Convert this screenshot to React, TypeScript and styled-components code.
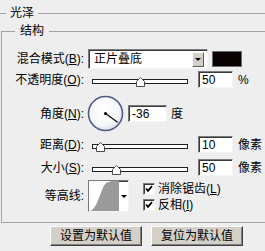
import React from 'react';
import styled, { createGlobalStyle } from 'styled-components';

const GlobalStyle = createGlobalStyle`
  html, body {
    margin: 0;
    padding: 0;
    background: #eeeeee;
  }
  body {
    font-family: 'Liberation Sans', 'Noto Sans CJK SC', sans-serif;
    font-size: 12px;
    color: #000;
  }
`;

const Frame = styled.div`
  width: 265px;
  height: 251px;
  overflow: hidden;
  padding-top: 6px;
  box-sizing: border-box;
`;

const OuterGroup = styled.fieldset`
  margin: 0 0 0 -6px;
  width: 300px;
  height: 280px;
  box-sizing: border-box;
  border: 1px solid #a3a3a3;
  padding: 4px 0 0 6px;

  & > legend {
    margin-left: 5px;
    padding: 0 4px;
    line-height: 14px;
  }
`;

const InnerGroup = styled.fieldset`
  margin: 0;
  width: 290px;
  box-sizing: border-box;
  border: 1px solid #a3a3a3;
  padding: 11px 0 10px 0;

  & > legend {
    margin-left: 13px;
    padding: 0 5px;
    line-height: 14px;
  }
`;

const Row = styled.div<{ $top: number; $h: number }>`
  display: flex;
  align-items: center;
  height: ${(p) => p.$h}px;
  margin-top: ${(p) => p.$top}px;
`;

const Label = styled.span`
  width: 82px;
  margin-right: 4px;
  text-align: right;
  line-height: 14px;
  white-space: nowrap;
`;

const U = styled.span`
  text-decoration: underline;
`;

const Sunken = styled.div<{ $w: number; $h: number }>`
  width: ${(p) => p.$w}px;
  height: ${(p) => p.$h}px;
  box-sizing: border-box;
  background: #fff;
  border: 1px solid;
  border-color: #7a7a7a #f4f4f4 #f4f4f4 #7a7a7a;
  box-shadow: inset 1px 1px 0 #3a3a3a;
`;

const Select = styled(Sunken)`
  display: flex;
  align-items: center;
  padding: 0 2px 0 5px;
  font-size: 12px;
  line-height: 14px;
`;

const SelectText = styled.span`
  flex: 1;
`;

const ArrowButton = styled.div`
  width: 12px;
  height: 15px;
  box-sizing: border-box;
  background: #d4d0c8;
  border: 1px solid;
  border-color: #ffffff #5a5a5a #5a5a5a #ffffff;
  display: flex;
  align-items: center;
  justify-content: center;
  margin-right: 1px;
`;

const Triangle = styled.div`
  width: 0;
  height: 0;
  border-left: 3px solid transparent;
  border-right: 3px solid transparent;
  border-top: 3px solid #000;
`;

const Swatch = styled.div`
  width: 30px;
  height: 16px;
  margin-left: 4px;
  box-sizing: border-box;
  background: #0a0202;
  border: 1px solid #6d6d6d;
`;

const SliderWrap = styled.div`
  position: relative;
  width: 104px;
  height: 16px;
  padding: 0 4px;
  box-sizing: border-box;
  display: flex;
  align-items: center;
  margin-right: 6px;
`;

const Track = styled.div`
  flex: 1;
  height: 5px;
  margin-top: 4px;
  box-sizing: border-box;
  background: #fff;
  border: 1px solid #1e1e1e;
`;

const Thumb = styled.svg`
  position: absolute;
  bottom: 1px;
  width: 9px;
  height: 10px;
`;

const Field = styled(Sunken)`
  padding-left: 3px;
  font-size: 12px;
  line-height: 14px;
  display: flex;
  align-items: center;
`;

const Unit = styled.span<{ $gap: number }>`
  margin-left: ${(p) => p.$gap}px;
  line-height: 14px;
`;

const Dial = styled.svg`
  width: 37px;
  height: 37px;
  margin-left: -1px;
  margin-right: 4px;
`;

const ContourBox = styled(Sunken)`
  display: flex;
  margin-right: 14px;
`;

const ContourGraph = styled.svg`
  width: 29px;
  height: 30px;
  display: block;
`;

const ContourArrow = styled.div`
  flex: 1;
  display: flex;
  align-items: center;
  justify-content: center;
  border-left: 1px solid #9a9a9a;
`;

const CheckList = styled.div`
  display: flex;
  flex-direction: column;
  margin-top: 2px;
`;

const CheckLine = styled.label`
  display: flex;
  align-items: center;
  height: 16px;
  line-height: 14px;
`;

const CheckBox = styled(Sunken)`
  margin-right: 3px;
  display: flex;
  align-items: center;
  justify-content: center;
`;

const ButtonRow = styled.div`
  display: flex;
  gap: 9px;
  margin: 3px 0 0 49px;
`;

const Button = styled.button`
  width: 92px;
  height: 20px;
  padding: 0;
  box-sizing: border-box;
  font-family: 'Liberation Sans', 'Noto Sans CJK SC', sans-serif;
  font-size: 12px;
  line-height: 14px;
  color: #000;
  background: #d4d0c8;
  border: 1px solid;
  border-color: #ffffff #404040 #404040 #ffffff;
  box-shadow: inset -1px -1px 0 #808080;
`;

const Slider = ({ value }: { value: number }) => (
  <SliderWrap>
    <Track />
    <Thumb viewBox="0 0 9 10" style={{ left: 4 + value * 96 - 4.5 }}>
      <polygon
        points="0.5,9.5 0.5,4.5 4.5,0.5 8.5,4.5 8.5,9.5"
        fill="#fff"
        stroke="#4a4a4a"
        strokeWidth="1"
      />
    </Thumb>
  </SliderWrap>
);

const Check = ({ children }: { children: React.ReactNode }) => (
  <CheckLine>
    <CheckBox $w={12} $h={12}>
      <svg width="8" height="8" viewBox="0 0 8 8">
        <path d="M1 3.5 L3 5.8 L7 1.2" fill="none" stroke="#000" strokeWidth="1.8" />
      </svg>
    </CheckBox>
    {children}
  </CheckLine>
);

export default function App() {
  const angle = (-36 * Math.PI) / 180;
  const ex = 18.5 + 15 * Math.cos(angle);
  const ey = 18.5 - 15 * Math.sin(angle);

  return (
    <>
      <GlobalStyle />
      <Frame>
        <OuterGroup>
          <legend>光泽</legend>
          <InnerGroup>
            <legend>结构</legend>

            <Row $top={0} $h={20}>
              <Label>
                混合模式(<U>B</U>):
              </Label>
              <Select $w={120} $h={20}>
                <SelectText>正片叠底</SelectText>
                <ArrowButton>
                  <Triangle />
                </ArrowButton>
              </Select>
              <Swatch />
            </Row>

            <Row $top={2} $h={17}>
              <Label>
                不透明度(<U>O</U>):
              </Label>
              <Slider value={0.5} />
              <Field $w={35} $h={17}>50</Field>
              <Unit $gap={5}>%</Unit>
            </Row>

            <Row $top={7} $h={37}>
              <Label>
                角度(<U>N</U>):
              </Label>
              <Dial viewBox="0 0 37 37">
                <defs>
                  <radialGradient id="dialFill" cx="45%" cy="40%" r="60%">
                    <stop offset="0%" stopColor="#ffffff" />
                    <stop offset="75%" stopColor="#f6f7f9" />
                    <stop offset="100%" stopColor="#d9dce4" />
                  </radialGradient>
                </defs>
                <circle cx="18.5" cy="18.5" r="17" fill="url(#dialFill)" stroke="#4d5c85" strokeWidth="1.6" />
                <line x1="18.5" y1="18.5" x2={ex} y2={ey} stroke="#000" strokeWidth="1.1" />
                <circle cx="18.5" cy="18.5" r="1.6" fill="#000" />
              </Dial>
              <Field $w={39} $h={17}>-36</Field>
              <Unit $gap={4}>度</Unit>
            </Row>

            <Row $top={4} $h={17}>
              <Label>
                距离(<U>D</U>):
              </Label>
              <Slider value={0.09} />
              <Field $w={35} $h={17}>10</Field>
              <Unit $gap={5}>像素</Unit>
            </Row>

            <Row $top={6} $h={17}>
              <Label>
                大小(<U>S</U>):
              </Label>
              <Slider value={0.26} />
              <Field $w={35} $h={17}>50</Field>
              <Unit $gap={5}>像素</Unit>
            </Row>

            <Row $top={4} $h={32}>
              <Label>等高线:</Label>
              <ContourBox $w={41} $h={32}>
                <ContourGraph viewBox="0 0 29 30">
                  <rect width="29" height="30" fill="#fff" />
                  <path d="M0 30 C 9 30, 12 4, 18 1.5 C 20 0.5, 22 0, 24 0 L29 0 L29 30 Z" fill="#9a9a9a" />
                </ContourGraph>
                <ContourArrow>
                  <Triangle />
                </ContourArrow>
              </ContourBox>
              <CheckList>
                <Check>
                  消除锯齿(<U>L</U>)
                </Check>
                <Check>
                  反相(<U>I</U>)
                </Check>
              </CheckList>
            </Row>
          </InnerGroup>

          <ButtonRow>
            <Button>设置为默认值</Button>
            <Button>复位为默认值</Button>
          </ButtonRow>
        </OuterGroup>
      </Frame>
    </>
  );
}
